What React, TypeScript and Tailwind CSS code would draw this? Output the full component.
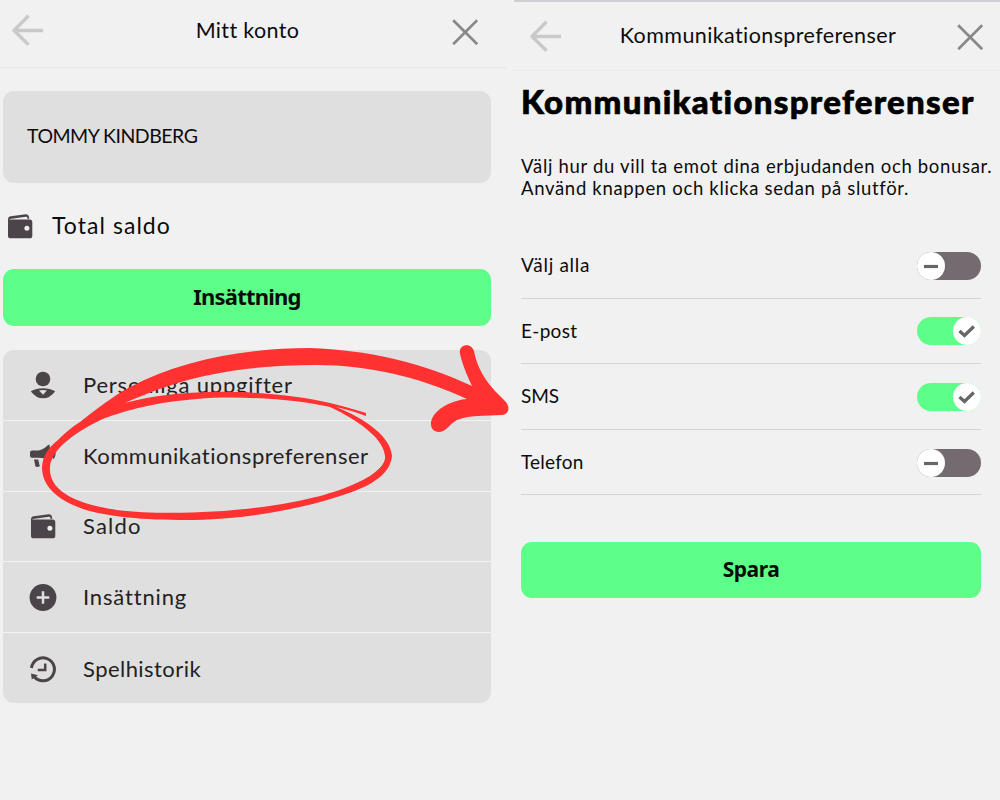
import type { ReactNode } from "react"

function BackArrow() {
  return (
    <svg width="32" height="32" viewBox="0 0 32 32" fill="none" stroke="#c9c9c9" strokeWidth="3.4">
      <path d="M32 16.500H3M17.500 1.800 3 16.500l14.500 14.200" strokeLinejoin="round" />
    </svg>
  )
}

function CloseIcon() {
  return (
    <svg width="26" height="26" viewBox="0 0 26 26" fill="none" stroke="#888" strokeWidth="2.7">
      <path d="m1.200 1.200 24 24M25.200 1.200l-24 24" />
    </svg>
  )
}

function WalletIcon() {
  return (
    <svg width="28" height="28" viewBox="0 0 28 28" fill="#4b4448">
      <path d="M3.500 7.600h20.200q2.600 0 2.600 2.600v13.500q0 2.600-2.600 2.600H4.600Q2 26.300 2 23.700V7.300Q2 4.600 4.800 4.200L19.800 2.200Q22.600 1.900 23 4.800L23.200 6.800H21.300V5.600Q21.200 4.600 20 4.800L3.800 6.900Q3 7.200 3.500 7.600Z" />
      <circle cx="20.900" cy="16.300" r="2.500" fill="#efefef" />
    </svg>
  )
}

function PersonIcon() {
  return (
    <svg width="28" height="28" viewBox="0 0 28 28" fill="#4b4448">
      <circle cx="14" cy="8" r="7.300" />
      <path d="M1.800 20.200Q7 17.200 14 17.200t12.200 3Q21 27.300 14 27.300T1.800 20.200Z" />
      <path d="M10 19.600q4-1.200 8 0l-4 4.200Z" fill="#dfdfdf" />
    </svg>
  )
}

function MegaphoneIcon() {
  return (
    <svg width="28" height="28" viewBox="0 0 28 28" fill="#4b4448">
      <path d="M1 10.500q0-2 2-2h6.500Q15 7.200 19 2.900L20.500 2.700 22.500 18.500 20.500 18.800Q16 15.600 9.500 15.700H3q-2 0-2-2Z" />
      <path d="M5 17.500h4.200l1.600 6.700q-3.200 1.400-4.400 0Z" />
      <path d="M24.200 7.500q3 4-.2 9" fill="none" stroke="#4b4448" strokeWidth="2" />
    </svg>
  )
}

function PlusIcon() {
  return (
    <svg width="28" height="28" viewBox="0 0 28 28" fill="#4b4448">
      <circle cx="14" cy="14.500" r="13.400" />
      <path d="M14 8.200v12.600M7.700 14.500h12.600" stroke="#dfdfdf" strokeWidth="2.500" />
    </svg>
  )
}

function HistoryIcon() {
  return (
    <svg width="28" height="28" viewBox="0 0 28 28" fill="none" stroke="#4b4448" strokeWidth="3">
      <path d="M2.500 13A11.500 11.500 0 1 1 5 21.500" />
      <path d="M16.200 8.500v6.500H8.800" strokeWidth="2.500" />
      <path d="M2 18.500 9 20.300 2.800 24.500Z" fill="#4b4448" stroke="none" />
    </svg>
  )
}

interface MenuItem {
  label: string
  icon: ReactNode
  spacing: string
}

const menuItems: MenuItem[] = [
  { label: "Personliga uppgifter", icon: <PersonIcon />, spacing: "tracking-[0.8px]" },
  { label: "Kommunikationspreferenser", icon: <MegaphoneIcon />, spacing: "tracking-[0.52px]" },
  { label: "Saldo", icon: <WalletIcon />, spacing: "tracking-[1.2px]" },
  { label: "Insättning", icon: <PlusIcon />, spacing: "tracking-[0.85px]" },
  { label: "Spelhistorik", icon: <HistoryIcon />, spacing: "tracking-[0.45px]" },
]

const channels = [
  { label: "Välj alla", on: false, spacing: "tracking-[0.7px]" },
  { label: "E-post", on: true, spacing: "tracking-[0.3px]" },
  { label: "SMS", on: true, spacing: "tracking-[-0.1px]" },
  { label: "Telefon", on: false, spacing: "tracking-[0.2px]" },
]

function Toggle({ on }: { on: boolean }) {
  return (
    <div className={`mt-px flex h-7 w-16 rounded-full ${on ? "justify-end bg-[#5dff89]" : "bg-[#736b70]"}`}>
      <div className="flex size-7 items-center justify-center rounded-full bg-white">
        <svg width="18" height="18" viewBox="0 0 18 18" fill="none" stroke="#666" strokeWidth="3.2">
          {on ? <path d="m1.500 9 5 4.500L15.800 4.500" /> : <path d="M2 9.500h14" />}
        </svg>
      </div>
    </div>
  )
}

function AccountPanel() {
  return (
    <section className="w-[514px] shrink-0">
      <header className="mr-2 flex h-[68px] items-start justify-between border-b border-[#e6e6e6] pr-[28px] pl-[11px]">
        <div className="pt-[14px]">
          <BackArrow />
        </div>
        <h2 className="pt-[15px] text-[21.5px] leading-[30px] tracking-[0.35px]">Mitt konto</h2>
        <div className="pt-[19px]">
          <CloseIcon />
        </div>
      </header>
      <div className="mr-[23px] ml-[3px] flex flex-col">
        <div className="mt-[23px] flex h-[92px] items-center rounded-[11px] bg-[#dfdfdf] pb-[3px] pl-[24px] text-[19.5px] tracking-[-0.5px]">
          TOMMY KINDBERG
        </div>
        <div className="mt-[24px] flex h-[38px] items-center gap-[18px] pl-[3px]">
          <WalletIcon />
          <span className="pb-[2px] text-[23px] tracking-[1.05px]">Total saldo</span>
        </div>
        <button className="mt-[24px] h-[57px] rounded-[11px] bg-[#5dff89] pb-[2px] font-['Noto_Sans',sans-serif] text-[22px] font-bold tracking-[-0.8px]">
          Insättning
        </button>
        <ul className="mt-[24px] h-[353px] overflow-hidden rounded-[11px] bg-[#dfdfdf] text-[#222]">
          {menuItems.map((item) => (
            <li
              key={item.label}
              className="flex h-[70.800px] items-center gap-[26px] border-b border-[#f3f3f3] pl-[26px] last:border-b-0"
            >
              {item.icon}
              <span className={`pb-px text-[22px] ${item.spacing}`}>{item.label}</span>
            </li>
          ))}
        </ul>
      </div>
    </section>
  )
}

function PreferencesPanel() {
  return (
    <section className="w-[486px] shrink-0 border-t-2 border-[#cfcfd4]">
      <header className="flex h-[69px] items-start justify-between border-b border-[#ebebeb] pr-[17px] pl-[15px]">
        <div className="pt-[18px]">
          <BackArrow />
        </div>
        <h2 className="pt-[18px] pr-[2px] text-[21.5px] leading-[30px] tracking-[0.4px]">Kommunikationspreferenser</h2>
        <div className="pt-[22px]">
          <CloseIcon />
        </div>
      </header>
      <div className="pr-[19px] pl-[7px]">
        <h1 className="mt-[10px] text-[33px] leading-[40px] font-black tracking-[1.3px] whitespace-nowrap text-black [-webkit-text-stroke:0.7px_black]">
          Kommunikationspreferenser
        </h1>
        <p className="mt-[34px] text-[18.500px] leading-[22px] tracking-[0.68px] whitespace-nowrap">
          Välj hur du vill ta emot dina erbjudanden och bonusar.
          <br />
          Använd knappen och klicka sedan på slutför.
        </p>
        <ul className="mt-[34px]">
          {channels.map((channel) => (
            <li key={channel.label} className="flex h-[65.600px] items-center justify-between border-b border-[#d4d4d4]">
              <span className={`text-[19px] ${channel.spacing}`}>{channel.label}</span>
              <Toggle on={channel.on} />
            </li>
          ))}
        </ul>
        <button className="mt-[47px] h-[56px] w-full rounded-[11px] bg-[#5dff89] pb-[2px] font-['Noto_Sans',sans-serif] text-[21px] font-bold tracking-[-0.5px]">
          Spara
        </button>
      </div>
    </section>
  )
}

// Hand-drawn circle with the arrow pointing over to the preferences panel
function Annotation() {
  return (
    <svg
      className="pointer-events-none absolute top-0 left-0"
      width="1000"
      height="800"
      viewBox="0 0 1000 800"
      fill="#ff3131"
    >
      <path
        fillRule="evenodd"
        d="M42 467C43 456 47 449 58 440C68 430 74 426 80 422C96 409 112 397 130 387C180 360 246 348 310 348C367 350 421 362 472 386C469 379 464 370 460 354C458 344 471 342 474 351C477 368 486 381 495 391L505 401C510 406 510 414 502 415C486 416 468 415 457 420C449 424 447 432 438 432C430 431 429 422 434 415C441 406 454 400 467 399C420 377 367 365 317 365C270 365 228 370 200 377C170 384 145 394 125 403C155 395 180 393 207 392C260 391 298 396 330 403Q350 408 366 413L366 416Q350 410 336 407C366 419 391 437 392 456C390 480 356 491 340 496C295 511 235 520 187 520C143 520 108 517 83 509C55 499 42 485 42 467ZM50 467C49 486 65 502 117 510C167 516 243 512 293 502C330 495 353 486 370 476C379 470 386 463 385 456C384 441 364 423 330 407C300 400 240 395 197 399C155 402 125 411 105 418C79 430 51 448 50 467Z"
      />
    </svg>
  )
}

export default function App() {
  return (
    <main className="relative flex h-[800px] w-[1000px] overflow-hidden bg-[#f1f1f1] font-['Lato',sans-serif] text-[#0c0c0c]">
      <AccountPanel />
      <PreferencesPanel />
      <Annotation />
    </main>
  )
}
